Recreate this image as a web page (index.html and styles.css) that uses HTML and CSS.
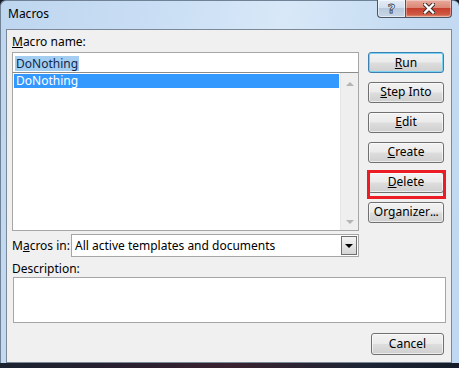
FILE: index.html
```html
<!DOCTYPE html>
<html lang="en">
<head>
    <meta charset="UTF-8">
    <title>Macros</title>
    <link rel="stylesheet" href="styles.css">
</head>
<body>
    <div class="window">
        <div class="titlebar">
            <span class="title">Macros</span>
            <div class="caption-buttons">
                <div class="cap-btn help"><span>?</span></div>
                <div class="cap-btn close">
                    <svg width="12" height="11" viewBox="0 0 12 11">
                        <path d="M2 1.5 L10 9.5 M10 1.5 L2 9.5" stroke="#3a2a2a" stroke-width="4.2" stroke-linecap="square"/>
                        <path d="M2 1.5 L10 9.5 M10 1.5 L2 9.5" stroke="#ffffff" stroke-width="2.4" stroke-linecap="square"/>
                    </svg>
                </div>
            </div>
        </div>

        <div class="client">
            <div class="top">
                <div class="left-col">
                    <div class="label"><u>M</u>acro name:</div>
                    <div class="name-box"><span class="sel-text">DoNothing</span></div>
                    <div class="list">
                        <div class="list-items">
                            <div class="list-item selected">DoNothing</div>
                        </div>
                        <div class="scrollbar">
                            <span class="arrow up"></span>
                            <span class="arrow down"></span>
                        </div>
                    </div>
                </div>
                <div class="right-col">
                    <div class="btn default"><u>R</u>un</div>
                    <div class="btn"><u>S</u>tep Into</div>
                    <div class="btn"><u>E</u>dit</div>
                    <div class="btn"><u>C</u>reate</div>
                    <div class="btn marked"><u>D</u>elete</div>
                    <div class="btn">Or<u>g</u>anizer<span class="dots">...</span></div>
                </div>
            </div>

            <div class="macros-in">
                <div class="label inline">M<u>a</u>cros in:</div>
                <div class="combo">
                    <span class="combo-text">All active templates and documents</span>
                    <div class="combo-btn"><span class="arrow black"></span></div>
                </div>
            </div>

            <div class="label desc-label">Description:</div>
            <div class="desc-box"></div>

            <div class="bottom">
                <div class="btn cancel">Cancel</div>
            </div>
        </div>
    </div>
    <div class="desktop"></div>
</body>
</html>
```

FILE: styles.css
```css
body {
    margin: 0;
    width: 459px;
    height: 368px;
    overflow: hidden;
    background: #161d29;
    font-family: "Noto Sans", "Open Sans", sans-serif;
    font-size: 12px;
    color: #000;
}

.window {
    width: 459px;
    height: 363px;
    box-sizing: border-box;
    background: linear-gradient(100deg, #bed6ef 0%, #c9def4 30%, #d8e8f8 55%, #c4dbf2 80%, #c0d8f1 100%);
    border-left: 1px solid #6f8296;
    border-top: 1px solid #6f8296;
    border-radius: 6px 6px 0 0;
}

/* title bar */
.titlebar {
    height: 28px;
    display: flex;
    justify-content: space-between;
    align-items: flex-start;
}

.title {
    padding: 5px 0 0 7px;
    font-size: 12px;
    line-height: 16px;
}

.caption-buttons {
    display: flex;
    margin-right: 7px;
    margin-top: -1px;
}

.cap-btn {
    height: 18px;
    box-sizing: border-box;
    border: 1px solid #4a5566;
    border-top: none;
    display: flex;
    align-items: center;
    justify-content: center;
}

.help {
    width: 28px;
    border-right: none;
    border-radius: 0 0 0 4px;
    background: linear-gradient(#e4edf7 0%, #d3e0ee 45%, #b9cadd 50%, #c8d6e6 100%);
    box-shadow: inset 0 0 0 1px rgba(255, 255, 255, 0.5);
}

.help span {
    font-family: "DejaVu Sans", sans-serif;
    font-weight: bold;
    font-size: 13px;
    line-height: 13px;
    color: #fff;
    -webkit-text-stroke: 0.8px #3b4350;
}

.close {
    width: 47px;
    border-radius: 0 0 4px 0;
    background: linear-gradient(#e7ab9c 0%, #dd8876 45%, #c7402e 50%, #cf5a44 85%, #e79a7c 100%);
    box-shadow: inset 0 0 0 1px rgba(255, 255, 255, 0.35);
}

/* client area */
.client {
    margin-left: 5px;
    width: 446px;
    height: 334px;
    box-sizing: border-box;
    border: 1px solid #7a8898;
    background: #f0f0f0;
    padding: 0 7px 0 5px;
}

.top {
    display: flex;
    gap: 9px;
}

.left-col {
    width: 347px;
}

.label {
    line-height: 15px;
}

.left-col .label {
    margin-top: 4px;
    margin-bottom: 3px;
}

.name-box {
    height: 21px;
    box-sizing: border-box;
    border: 1px solid #a6a6a6;
    background: #fff;
    padding: 2px 0 0 2px;
}

.sel-text {
    background: #a4cdf2;
    color: #12284a;
    line-height: 15px;
    display: inline-block;
    padding: 0 1px;
}

.list {
    margin-top: -1px;
    height: 159px;
    box-sizing: border-box;
    border: 1px solid #a6a6a6;
    border-top-color: #8c8c8c;
    background: #fff;
    display: flex;
}

.list-items {
    flex: 1;
    padding: 1px 0 0 1px;
}

.list-item {
    line-height: 14px;
    padding-left: 2px;
}

.list-item.selected {
    background: #3399ff;
    color: #fff;
    margin-right: 1px;
}

.scrollbar {
    width: 17px;
    background: #efefef;
    border-left: 1px solid #e6e6e6;
    display: flex;
    flex-direction: column;
    justify-content: space-between;
    align-items: center;
    padding: 9px 0 6px;
}

.arrow {
    width: 0;
    height: 0;
    border-left: 4px solid transparent;
    border-right: 4px solid transparent;
}

.arrow.up {
    border-bottom: 4px solid #b4b4b4;
}

.arrow.down {
    border-top: 4px solid #b4b4b4;
}

.arrow.black {
    border-top: 4px solid #000;
}

.right-col {
    padding-top: 22px;
    display: flex;
    flex-direction: column;
    gap: 9px;
}

.btn {
    width: 76px;
    height: 21px;
    box-sizing: border-box;
    border: 1px solid #707070;
    border-radius: 3px;
    background: linear-gradient(#f2f2f2 0%, #ebebeb 48%, #dddddd 52%, #cfcfcf 100%);
    box-shadow: inset 0 0 0 1px rgba(255, 255, 255, 0.6);
    text-align: center;
    line-height: 18px;
    color: #000;
}

.dots {
    letter-spacing: -0.5px;
}

.btn.default {
    border-color: #3c7fb1;
    box-shadow: inset 0 0 0 1px #7ad2f2;
    line-height: 19px;
}

.btn.marked {
    position: relative;
}

.btn.marked::after {
    content: "";
    position: absolute;
    left: -2px;
    top: -3px;
    width: 79px;
    height: 29px;
    box-sizing: border-box;
    border: 3px solid #ec1c24;
}

/* macros in row */
.macros-in {
    display: flex;
    align-items: center;
    margin-top: 3px;
}

.label.inline {
    width: 59px;
}

.combo {
    width: 288px;
    height: 23px;
    box-sizing: border-box;
    border: 1px solid #a6a6a6;
    background: #fff;
    display: flex;
    align-items: center;
    justify-content: space-between;
    padding: 0 1px 0 3px;
}

.combo-btn {
    width: 16px;
    height: 19px;
    box-sizing: border-box;
    border: 1px solid #6f6f6f;
    background: linear-gradient(#f4f4f4, #d6d6d6);
    display: flex;
    align-items: center;
    justify-content: center;
}

.desc-label {
    margin-top: 4px;
}

.desc-box {
    margin: 1px 0 0 1px;
    width: 433px;
    height: 46px;
    box-sizing: border-box;
    border: 1px solid #a6a6a6;
    background: #fff;
}

.bottom {
    display: flex;
    justify-content: flex-end;
    margin-top: 10px;
}

.btn.cancel {
    width: 73px;
    height: 22px;
    line-height: 19px;
}

.desktop {
    height: 5px;
    background: linear-gradient(90deg, #1b2330, #2a2030 30%, #3a2230 50%, #1c2535 80%, #161d29);
}
```
